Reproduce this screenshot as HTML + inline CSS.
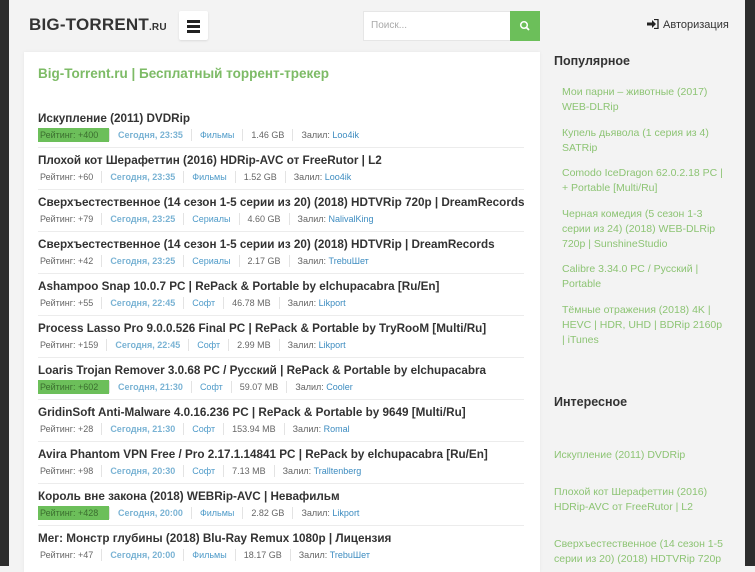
<!DOCTYPE html>
<html><head><meta charset="utf-8"><style>
*{margin:0;padding:0;box-sizing:border-box}
body{width:755px;height:566px;overflow:hidden;background:#f3f3f3;font-family:"Liberation Sans","DejaVu Sans",sans-serif;position:relative}
.dl{position:absolute;left:0;top:0;width:9px;height:566px;background:#2d2d2d}
.dr{position:absolute;right:0;top:0;width:10px;height:566px;background:#2d2d2d}
.logo{position:absolute;left:29px;top:15px;font-size:17px;font-weight:bold;color:#333;letter-spacing:0.2px}
.logo small{font-size:10px}
.burger{position:absolute;left:179px;top:11px;width:29px;height:29px;background:#fff;border-radius:2px;box-shadow:0 1px 2px rgba(0,0,0,.1)}
.burger i{position:absolute;left:8px;width:13px;height:2.5px;background:#222}
.search{position:absolute;left:363px;top:11px;width:148px;height:30px;background:#fff;border:1px solid #e6e6e6;font-size:10px;color:#aaa;padding:8px 7px}
.sbtn{position:absolute;left:510px;top:11px;width:30px;height:30px;background:#6cbf5a}
.auth{position:absolute;left:647px;top:19px;font-size:11px;color:#333}
.main{position:absolute;left:24px;top:52px;width:516px;height:520px;background:#fff;box-shadow:0 0 3px rgba(0,0,0,.06)}
.h1{position:absolute;left:38px;top:66px;font-size:13.5px;font-weight:bold;color:#7dbb66}
.row{position:absolute;left:38px;width:486px}
.t{font-size:11.7px;font-weight:bold;color:#333;white-space:nowrap;height:15px;line-height:15px}
.m{display:flex;align-items:center;font-size:9px;color:#666;height:14px;margin-top:2px;white-space:nowrap}
.m span{padding:0 8px;border-left:1px solid #e3e3e3;line-height:12px}
.m span:first-child{border:none;padding-left:2px}
.m .g{background:#6cbf5a;color:#3b6e2f;padding:0 8px 0 2px;line-height:14px;width:71px}
.m .d{color:#7ab3d4;font-weight:bold}
.m .c{color:#4f9bc9}
.m b{font-weight:normal;color:#3d8cc0}
.row hr{border:none;border-top:1px solid #ececec;margin-top:5px}
.side{position:absolute;left:554px;font-size:12.5px;font-weight:bold;color:#333}
.si{position:absolute;left:562px;width:162px;font-size:10.5px;line-height:15px;color:#8dc474}
.si2{position:absolute;left:554px;width:180px;font-size:10.5px;line-height:15px;color:#8dc474}
</style></head><body>
<div class="dl"></div><div class="dr"></div>
<div class="logo">BIG-TORRENT<small>.RU</small></div>
<div class="burger"><i style="top:9px"></i><i style="top:14px"></i><i style="top:19px"></i></div>
<div class="search">Поиск...</div>
<div class="sbtn"><svg width="30" height="30"><circle cx="14" cy="14" r="3.3" fill="none" stroke="#fff" stroke-width="1.5"/><line x1="16.5" y1="16.5" x2="19" y2="19" stroke="#fff" stroke-width="1.8"/></svg></div>
<div class="auth"><svg width="12" height="10" style="vertical-align:-1px;margin-right:4px"><path d="M0 3.5h5V1l4 4-4 4V6.5H0z" fill="#222"/><path d="M7 0.5h4v9H7" fill="none" stroke="#222" stroke-width="1.3"/></svg>Авторизация</div>
<div class="main"></div>
<div class="h1">Big-Torrent.ru | Бесплатный торрент-трекер</div>

<div class="row" style="top:111px"><div class="t">Искупление (2011) DVDRip</div><div class="m"><span class="g">Рейтинг: +400</span><span class="d">Сегодня, 23:35</span><span class="c">Фильмы</span><span>1.46 GB</span><span>Залил: <b>Loo4ik</b></span></div><hr></div>
<div class="row" style="top:153px"><div class="t">Плохой кот Шерафеттин (2016) HDRip-AVC от FreeRutor | L2</div><div class="m"><span>Рейтинг: +60</span><span class="d">Сегодня, 23:35</span><span class="c">Фильмы</span><span>1.52 GB</span><span>Залил: <b>Loo4ik</b></span></div><hr></div>
<div class="row" style="top:195px"><div class="t">Сверхъестественное (14 сезон 1-5 серии из 20) (2018) HDTVRip 720p | DreamRecords</div><div class="m"><span>Рейтинг: +79</span><span class="d">Сегодня, 23:25</span><span class="c">Сериалы</span><span>4.60 GB</span><span>Залил: <b>NalivalKing</b></span></div><hr></div>
<div class="row" style="top:237px"><div class="t">Сверхъестественное (14 сезон 1-5 серии из 20) (2018) HDTVRip | DreamRecords</div><div class="m"><span>Рейтинг: +42</span><span class="d">Сегодня, 23:25</span><span class="c">Сериалы</span><span>2.17 GB</span><span>Залил: <b>TrebuШет</b></span></div><hr></div>
<div class="row" style="top:279px"><div class="t">Ashampoo Snap 10.0.7 PC | RePack &amp; Portable by elchupacabra [Ru/En]</div><div class="m"><span>Рейтинг: +55</span><span class="d">Сегодня, 22:45</span><span class="c">Софт</span><span>46.78 MB</span><span>Залил: <b>Likport</b></span></div><hr></div>
<div class="row" style="top:321px"><div class="t">Process Lasso Pro 9.0.0.526 Final PC | RePack &amp; Portable by TryRooM [Multi/Ru]</div><div class="m"><span>Рейтинг: +159</span><span class="d">Сегодня, 22:45</span><span class="c">Софт</span><span>2.99 MB</span><span>Залил: <b>Likport</b></span></div><hr></div>
<div class="row" style="top:363px"><div class="t">Loaris Trojan Remover 3.0.68 PC / Русский | RePack &amp; Portable by elchupacabra</div><div class="m"><span class="g">Рейтинг: +602</span><span class="d">Сегодня, 21:30</span><span class="c">Софт</span><span>59.07 MB</span><span>Залил: <b>Cooler</b></span></div><hr></div>
<div class="row" style="top:405px"><div class="t">GridinSoft Anti-Malware 4.0.16.236 PC | RePack &amp; Portable by 9649 [Multi/Ru]</div><div class="m"><span>Рейтинг: +28</span><span class="d">Сегодня, 21:30</span><span class="c">Софт</span><span>153.94 MB</span><span>Залил: <b>Romal</b></span></div><hr></div>
<div class="row" style="top:447px"><div class="t">Avira Phantom VPN Free / Pro 2.17.1.14841 PC | RePack by elchupacabra [Ru/En]</div><div class="m"><span>Рейтинг: +98</span><span class="d">Сегодня, 20:30</span><span class="c">Софт</span><span>7.13 MB</span><span>Залил: <b>Tralltenberg</b></span></div><hr></div>
<div class="row" style="top:489px"><div class="t">Король вне закона (2018) WEBRip-AVC | Невафильм</div><div class="m"><span class="g">Рейтинг: +428</span><span class="d">Сегодня, 20:00</span><span class="c">Фильмы</span><span>2.82 GB</span><span>Залил: <b>Likport</b></span></div><hr></div>
<div class="row" style="top:531px"><div class="t">Мег: Монстр глубины (2018) Blu-Ray Remux 1080p | Лицензия</div><div class="m"><span>Рейтинг: +47</span><span class="d">Сегодня, 20:00</span><span class="c">Фильмы</span><span>18.17 GB</span><span>Залил: <b>TrebuШет</b></span></div></div>

<div class="side" style="top:54px">Популярное</div>
<div class="si" style="top:85px">Мои парни – животные (2017) WEB-DLRip</div>
<div class="si" style="top:126px">Купель дьявола (1 серия из 4) SATRip</div>
<div class="si" style="top:166px">Comodo IceDragon 62.0.2.18 PC | + Portable [Multi/Ru]</div>
<div class="si" style="top:207px">Черная комедия (5 сезон 1-3 серии из 24) (2018) WEB-DLRip 720p | SunshineStudio</div>
<div class="si" style="top:262px">Calibre 3.34.0 PC / Русский | Portable</div>
<div class="si" style="top:303px">Тёмные отражения (2018) 4K | HEVC | HDR, UHD | BDRip 2160p | iTunes</div>
<div class="side" style="top:395px">Интересное</div>
<div class="si2" style="top:448px">Искупление (2011) DVDRip</div>
<div class="si2" style="top:485px">Плохой кот Шерафеттин (2016) HDRip-AVC от FreeRutor | L2</div>
<div class="si2" style="top:537px">Сверхъестественное (14 сезон 1-5 серии из 20) (2018) HDTVRip 720p</div>
</body></html>
